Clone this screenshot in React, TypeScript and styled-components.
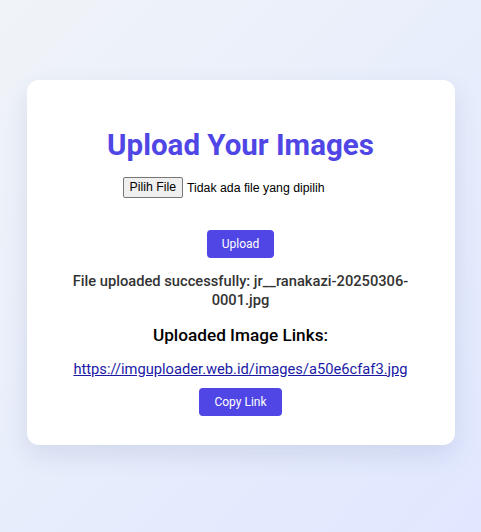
import React from "react";
import styled, { createGlobalStyle } from "styled-components";

const GlobalStyle = createGlobalStyle`
  html, body { margin: 0; padding: 0; }
  body {
    min-height: 532px;
    background: linear-gradient(135deg, #f0f4f8 0%, #e0e7ff 100%);
    font-family: Roboto, "Liberation Sans", Arial, sans-serif;
  }
`;

const Page = styled.div`
  display: flex;
  justify-content: center;
  align-items: flex-start;
  padding-top: 80px;
  min-height: 532px;
  box-sizing: border-box;
`;

const Card = styled.div`
  width: 428px;
  box-sizing: border-box;
  background: #ffffff;
  border-radius: 12px;
  box-shadow: 0 10px 25px rgba(60, 70, 120, 0.12);
  padding: 46px 24px 29px;
  display: flex;
  flex-direction: column;
  align-items: center;
  text-align: center;
`;

const Title = styled.h1`
  margin: 0;
  font-size: 29.5px;
  line-height: 38px;
  font-weight: 700;
  color: #4f46e5;
`;

const FileRow = styled.div`
  margin-top: 13px;
  width: 236px;
  display: flex;
  align-items: center;
  gap: 4px;
  font-family: "Liberation Sans", Arial, sans-serif;
  font-size: 12.3px;
  color: #000;
`;

const FileButton = styled.span`
  display: inline-block;
  background: #efefef;
  border: 1px solid #767676;
  border-radius: 2px;
  padding: 2px 6px;
  line-height: 15px;
`;

const ActionButton = styled.button<{ $gap: number }>`
  margin-top: ${(p) => p.$gap}px;
  height: 28px;
  padding: 0 15px;
  border: none;
  border-radius: 4px;
  background: #4f46e5;
  color: #ffffff;
  font-family: Roboto, "Liberation Sans", Arial, sans-serif;
  font-size: 12px;
  cursor: pointer;
`;

const Status = styled.p`
  margin: 14px 0 0;
  font-size: 14.7px;
  font-weight: 500;
  line-height: 18.75px;
  color: #333333;
`;

const LinksHeading = styled.h3`
  margin: 14px 0 0;
  font-size: 17.2px;
  font-weight: 500;
  line-height: 22px;
  color: #000000;
`;

const ImageLink = styled.a`
  display: block;
  margin-top: 14px;
  font-size: 14.7px;
  line-height: 19px;
  color: #1a1aa6;
  text-decoration: underline;
`;

export default function App() {
  return (
    <>
      <GlobalStyle />
      <Page>
        <Card>
          <Title>Upload Your Images</Title>
          <FileRow>
            <FileButton>Pilih File</FileButton>
            <span>Tidak ada file yang dipilih</span>
          </FileRow>
          <ActionButton $gap={32}>Upload</ActionButton>
          <Status>File uploaded successfully: jr__ranakazi-20250306-0001.jpg</Status>
          <LinksHeading>Uploaded Image Links:</LinksHeading>
          <ImageLink href="#">https://imguploader.web.id/images/a50e6cfaf3.jpg</ImageLink>
          <ActionButton $gap={9}>Copy Link</ActionButton>
        </Card>
      </Page>
    </>
  );
}
